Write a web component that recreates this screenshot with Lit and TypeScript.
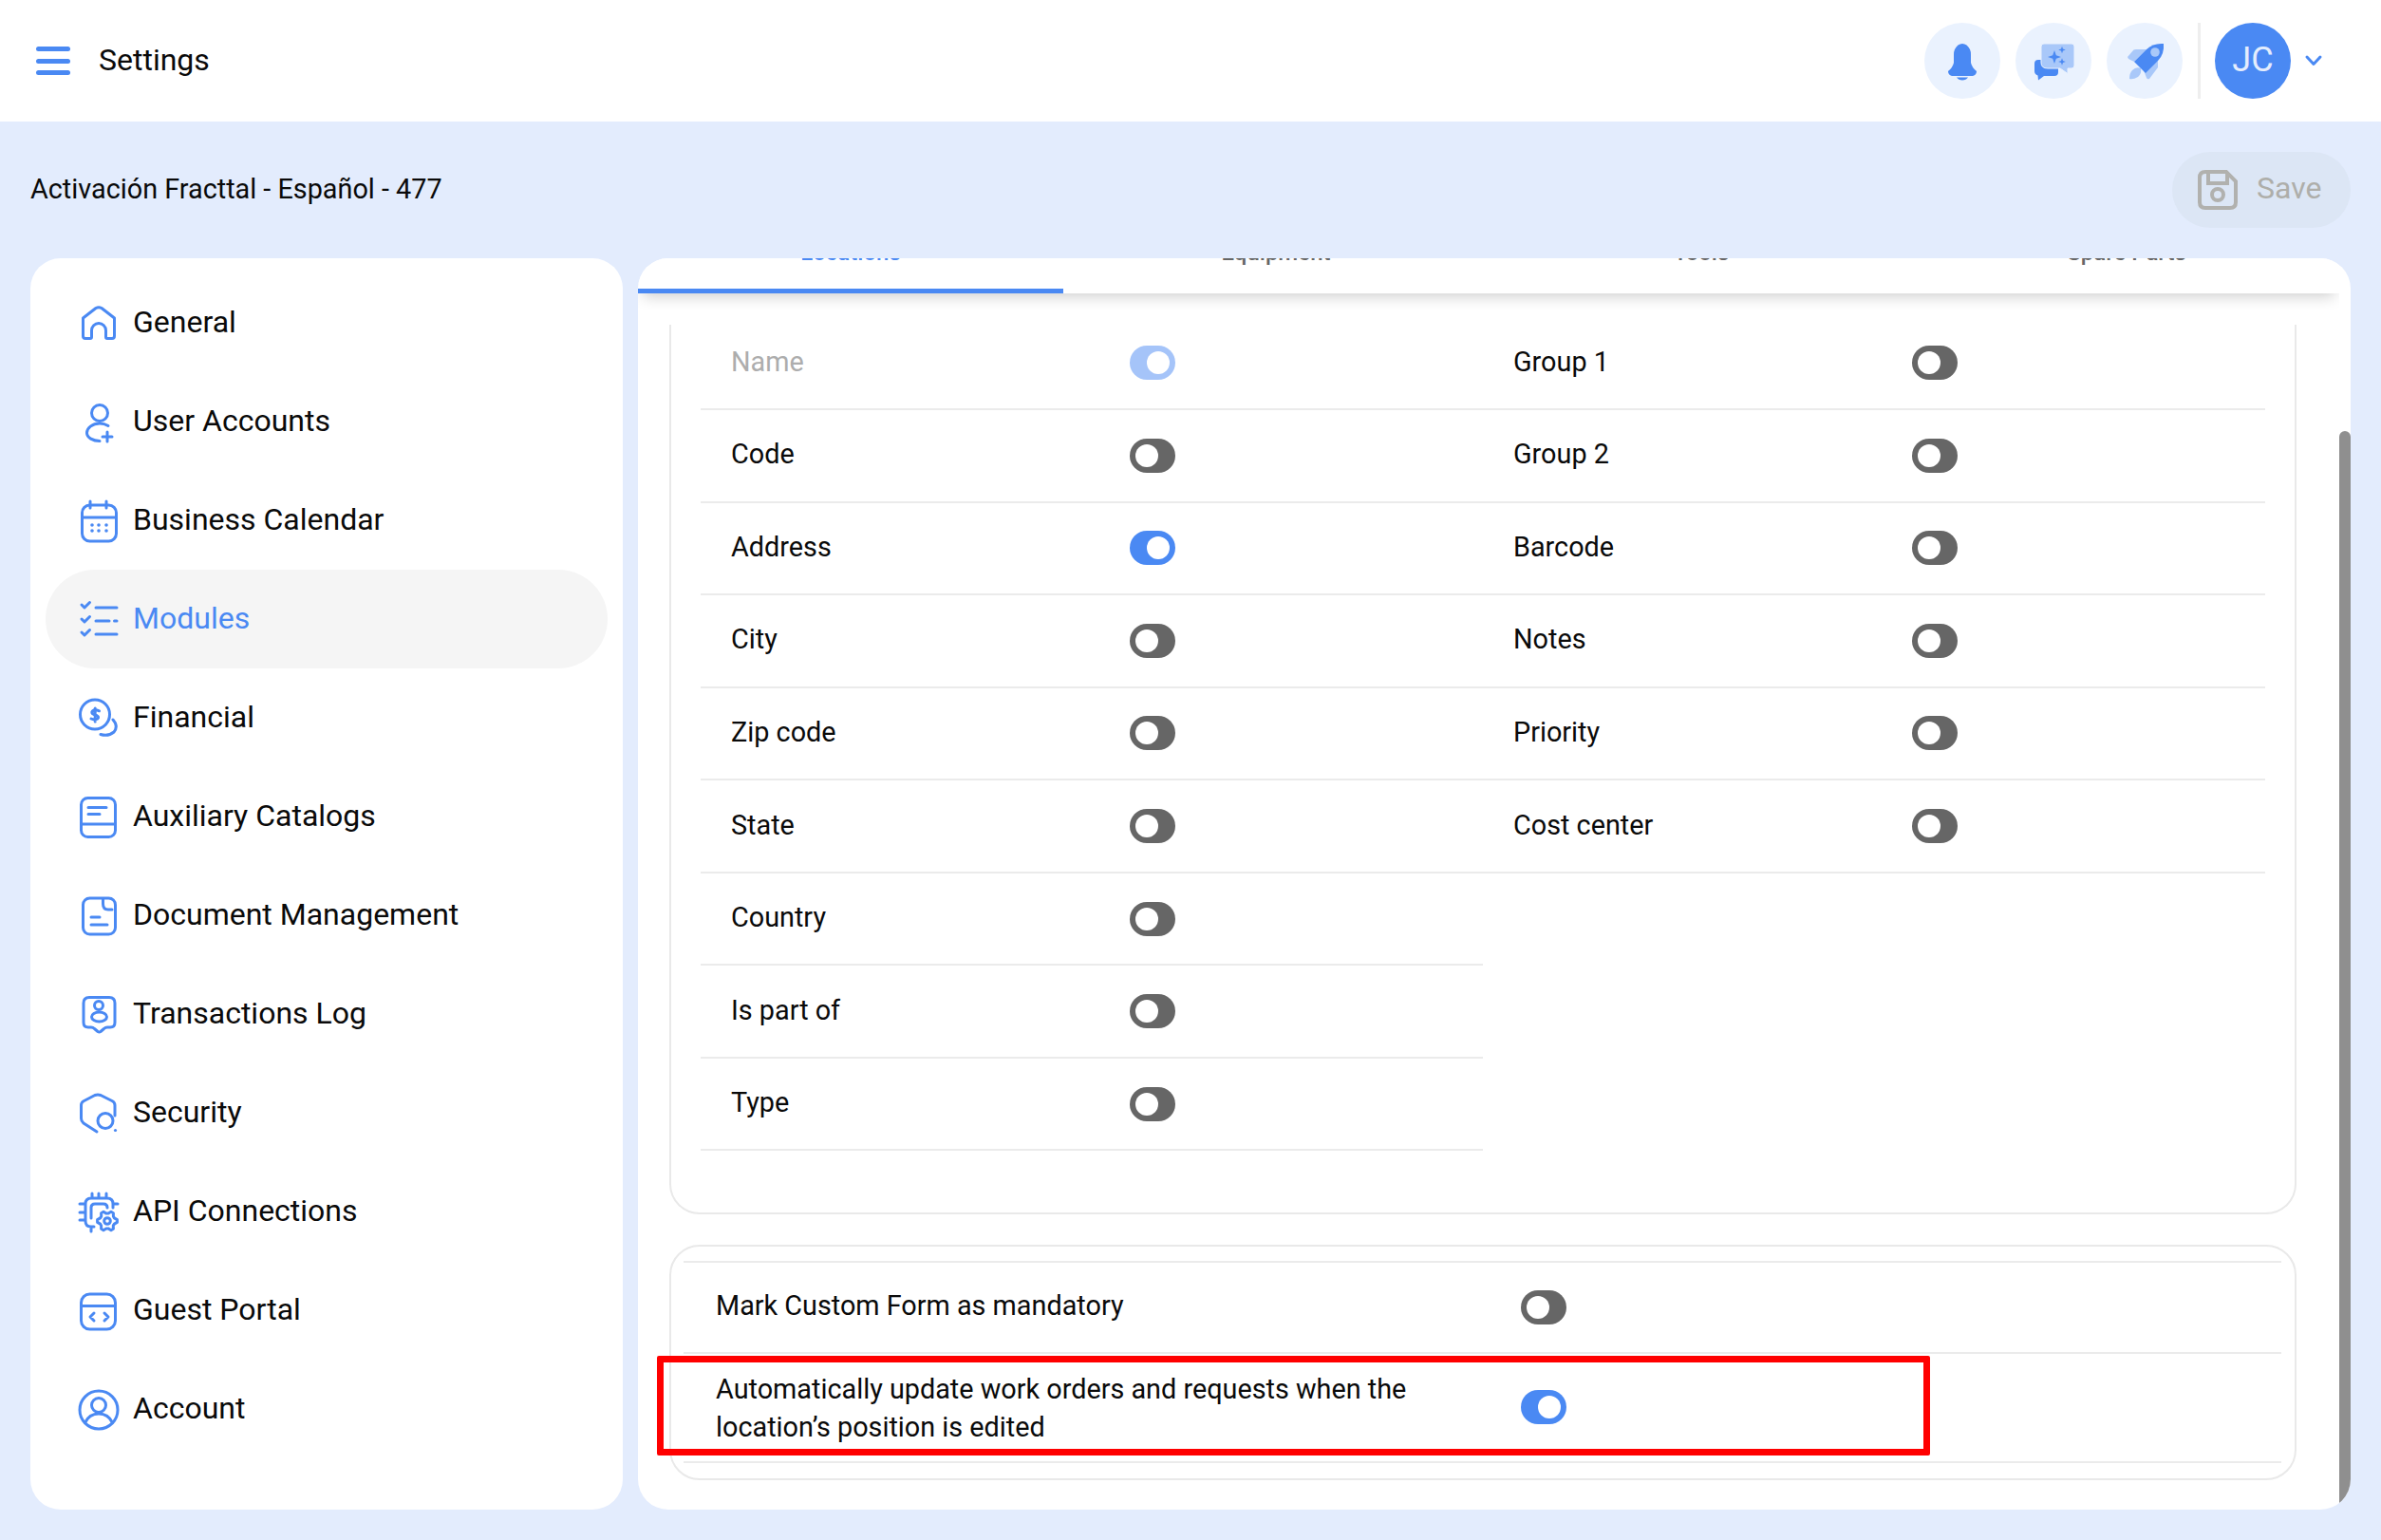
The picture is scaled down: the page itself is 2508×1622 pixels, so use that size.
import { LitElement, html, css, svg } from "lit";
import { customElement } from "lit/decorators.js";

const gear = (() => {
  const cx = 31, cy = 32;
  const pts: string[] = [];
  for (let i = 0; i < 24; i++) {
    const a = (i / 24) * Math.PI * 2;
    const r = [10.5, 10.5, 8, 8][i % 4];
    pts.push(`${(cx + r * Math.cos(a - 0.13)).toFixed(1)} ${(cy + r * Math.sin(a - 0.13)).toFixed(1)}`);
  }
  return "M" + pts.join("L") + "Z";
})();

const navIcons: Record<string, unknown> = {
  general: svg`<path d="M5.5 17 19 6.5Q22 5 25 6.5L38.5 17V36Q38.5 38.5 36 38.5H31Q29.5 38.5 29.5 37V30A7.5 7.5 0 0 0 14.5 30V37Q14.5 38.5 13 38.5H8Q5.5 38.5 5.5 36Z"/>`,
  user: svg`<circle cx="23" cy="13" r="8.5"/><path d="M32 26.5Q28 24 23 24C15 24 9.5 29 9.5 34 9.5 39 16 42.5 23 42.5"/><path d="M31 33V43M26 38H36"/>`,
  calendar: svg`<rect x="4.5" y="6" width="36" height="38" rx="8"/><path d="M4.5 19H40.5M13 2V9M30 2V9"/><g class="f"><circle class="f" cx="15" cy="27" r="1.8"/><circle class="f" cx="22" cy="27" r="1.8"/><circle class="f" cx="30" cy="27" r="1.8"/><circle class="f" cx="15" cy="33" r="1.8"/><circle class="f" cx="22" cy="33" r="1.8"/><circle class="f" cx="30" cy="33" r="1.8"/></g>`,
  modules: svg`<path d="M4 7 7 10 12.5 4.5M4 22 7 25 12.5 19.5M4 36 7 39 12.5 33.5M19 10H41M19 24H33M38.5 24H41M19 38H41"/>`,
  financial: svg`<circle cx="18" cy="18.5" r="15.5"/><path d="M37 24Q43 31 38 37 32 42 24 39.5"/><path d="M22.5 14.8Q18 12.8 15.5 14.8 13.5 17 16.8 18.5L19.8 19.5Q22.8 21 20.8 23 18 24.8 14 23M18.2 12V26"/>`,
  catalogs: svg`<rect x="3.5" y="2.5" width="36" height="41" rx="7"/><path d="M3.5 30H39.5M11 12.5H30M11 19.5H23"/>`,
  document: svg`<rect x="5.5" y="4" width="34" height="38" rx="7"/><path d="M26.5 5V10Q26.5 16 32 16H36M14 24H23M14 32H31"/>`,
  log: svg`<path d="M12 4.5H33Q39 4.5 39 10.5V31Q39 36 34 36H31Q29 36 27.5 37.5L24 40.5Q22.5 41.5 21 40.5L17.5 37.5Q16 36 14 36H11Q6 36 6 31V10.5Q6 4.5 12 4.5Z"/><circle cx="22" cy="13" r="4.5"/><ellipse cx="22.5" cy="25" rx="8" ry="5"/>`,
  security: svg`<path d="M39 25V14Q39 11 36 9.5L24 3.5Q21 2.5 18 3.5L6.5 9.5Q3.5 11 3.5 14V28Q3.5 31 6 33L20 42"/><circle cx="29" cy="30.5" r="8"/><circle class="f" cx="39.5" cy="40.5" r="1.6"/>`,
  api: svg`<path d="M17 38H14Q8 38 8 32V14Q8 8 14 8H31Q37 8 37 14V18M14 29V18Q14 14 18 14H27Q31 14 31 18M15 3V8M22 3V8M30 3V8M2 14H8M2 23H8M2 31H8M37 14H42M14 38V43"/><path d="${gear}"/><circle cx="31" cy="32" r="3.3"/>`,
  guest: svg`<rect x="3.5" y="5" width="36" height="37" rx="9"/><path d="M3.5 17.5H39.5M17 25 13 29 17 33M28 25 32 29 28 33"/>`,
  account: svg`<circle cx="22" cy="23" r="20"/><circle cx="22" cy="18" r="7.5"/><path d="M7.5 36.5Q12 27 22 27 32 27 36.5 36.5"/>`,
};

const navItems = [
  ["general", "General"],
  ["user", "User Accounts"],
  ["calendar", "Business Calendar"],
  ["modules", "Modules"],
  ["financial", "Financial"],
  ["catalogs", "Auxiliary Catalogs"],
  ["document", "Document Management"],
  ["log", "Transactions Log"],
  ["security", "Security"],
  ["api", "API Connections"],
  ["guest", "Guest Portal"],
  ["account", "Account"],
];

const leftFields: [string, string][] = [
  ["Name", "locked"], ["Code", "off"], ["Address", "on"], ["City", "off"], ["Zip code", "off"],
  ["State", "off"], ["Country", "off"], ["Is part of", "off"], ["Type", "off"],
];
const rightFields: [string, string][] = [
  ["Group 1", "off"], ["Group 2", "off"], ["Barcode", "off"], ["Notes", "off"], ["Priority", "off"], ["Cost center", "off"],
];

const sparkle = (x: number, y: number, r: number) => {
  const k = r * 0.26;
  return `M${x} ${y - r}L${x + k} ${y - k}L${x + r} ${y}L${x + k} ${y + k}L${x} ${y + r}L${x - k} ${y + k}L${x - r} ${y}L${x - k} ${y - k}Z`;
};

@customElement("app-root")
export class AppRoot extends LitElement {
  static styles = css`
    :host {
      display: block;
      position: relative;
      width: 2508px;
      height: 1622px;
      overflow: hidden;
      background: #e3ecfd;
      font-family: Roboto, "Liberation Sans", sans-serif;
      color: #0a0a0a;
    }
    svg { display: block; overflow: visible; }
    .topbar {
      height: 128px;
      background: #fff;
      display: flex;
      align-items: center;
      padding: 0 24px 0 38px;
    }
    .burger { display: flex; flex-direction: column; gap: 7.5px; width: 36px; margin-right: 30px; }
    .burger i { display: block; height: 5px; border-radius: 3px; background: #4a89f3; }
    .page { font-size: 32px; flex: 1; margin-top: -3px; }
    .round {
      width: 80px; height: 80px; border-radius: 50%;
      background: #eaf2fe; margin-right: 16px; flex: none;
    }
    .sep { width: 3px; height: 80px; background: #eeeeee; margin-right: 15px; }
    .avatar {
      width: 80px; height: 80px; border-radius: 50%;
      background: #4a89f3; color: #e4edfd; font-size: 36px; padding-bottom: 3px; box-sizing: border-box;
      display: flex; align-items: center; justify-content: center; margin-right: 15px;
    }
    .caret { width: 18px; height: 12px; margin-right: 38px; }
    .caret path { fill: none; stroke: #4a89f3; stroke-width: 3; stroke-linecap: round; stroke-linejoin: round; }
    .sub {
      height: 144px;
      display: flex;
      align-items: center;
      justify-content: space-between;
      padding: 0 32px;
    }
    .title { font-size: 28.8px; margin-top: -2px; }
    .save {
      width: 188px; height: 80px; border-radius: 40px; background: #dce6f5;
      display: flex; align-items: center; gap: 20px; padding-left: 27px; box-sizing: border-box;
      color: #aeaeaa; font-size: 32px;
    }
    .save span { margin-top: -4px; }
    .save svg { fill: none; stroke: #b1b1ae; stroke-width: 4; }
    .main { display: flex; gap: 16px; padding: 0 32px; height: 1318px; }
    .side {
      width: 624px; flex: none; box-sizing: border-box; background: #fff;
      border-radius: 32px; padding: 16px;
    }
    .item {
      height: 104px; display: flex; align-items: center; gap: 12px;
      padding-left: 32px; font-size: 32px; border-radius: 52px;
    }
    .item span { margin-top: -2px; }
    .item svg { fill: none; stroke: #4a89f3; stroke-width: 3; stroke-linecap: round; stroke-linejoin: round; flex: none; }
    .item svg circle.f { fill: #4a89f3; stroke: none; }
    .item.active { background: #f5f5f5; color: #4a89f3; }
    .card {
      flex: 1; background: #fff; border-radius: 32px; overflow: hidden;
      display: flex; min-width: 0;
    }
    .body { flex: 1; min-width: 0; display: flex; flex-direction: column; overflow: hidden; }
    .track { width: 12px; flex: none; }
    .thumb { margin-top: 182px; height: 1136px; background: #8f8f8f; border-radius: 6px 6px 0 0; }
    .tabs {
      height: 37px; flex: none; display: flex; position: relative;
      box-shadow: 0 8px 16px -5px rgba(0, 0, 0, 0.2);
      background: #fff;
    }
    .tab {
      flex: 1; box-sizing: border-box; height: 37px; display: flex; flex-direction: column;
      justify-content: flex-end; align-items: center; padding-bottom: 29px;
      font-size: 24px; line-height: 28px; color: #666; font-weight: 500; overflow: visible; white-space: nowrap;
    }
    .tab.sel { color: #4a89f3; box-shadow: inset 0 -5px 0 #4a89f3; }
    .scroll { flex: 1; margin-top: 33px; overflow: hidden; min-height: 0; }
    .panels { margin-top: -40px; padding: 0 45px 0 33px; }
    .panel {
      border: 2px solid #e9e9e9; border-radius: 32px; box-sizing: border-box;
    }
    .fields {
      height: 976.5px; padding: 30.5px 0 0 31px; display: grid; grid-template-columns: 824px 824px; align-content: start;
    }
    .row {
      height: 97.55px; box-sizing: border-box; border-bottom: 2px solid #ebebeb;
      display: grid; grid-template-columns: 420px 48px; align-items: center; padding-left: 32px;
      font-size: 28.8px;
    }
    .row.locked .lbl { color: #adadad; }
    .lbl { margin-top: -3px; }
    .toggle {
      width: 48px; height: 36px; border-radius: 18px; position: relative; display: block; background: #666;
    }
    .toggle::after {
      content: ""; position: absolute; top: 6px; left: 6px; width: 24px; height: 24px;
      border-radius: 50%; background: #fff;
    }
    .toggle.on { background: #4a89f3; }
    .toggle.locked { background: #a5c4f9; }
    .toggle.on::after, .toggle.locked::after { left: 18px; }
    .forms {
      margin-top: 32px; height: 248px; padding: 15px 14px 0 13px;
    }
    .frow {
      display: grid; grid-template-columns: 848px 48px; align-items: center; padding-left: 34px;
      font-size: 28.8px; line-height: 40px; border-bottom: 2px solid #ebebeb; box-sizing: border-box;
    }
    .frow.first { height: 98px; border-top: 2px solid #ebebeb; }
    .frow.second { height: 115px; }
    .frow.second .lbl { margin-top: 1px; }
    .frow .lbl { max-width: 790px; }
    .mark {
      position: absolute; left: 692px; top: 1428px; width: 1341px; height: 105px; box-sizing: border-box;
      border: 7px solid #ff0000; border-radius: 2px;
    }
  `;

  private row(f: [string, string]) {
    return html`<div class="row ${f[1] === "locked" ? "locked" : ""}">
      <span class="lbl">${f[0]}</span><span class="toggle ${f[1]}"></span>
    </div>`;
  }

  render() {
    return html`
      <div class="topbar">
        <div class="burger"><i></i><i></i><i></i></div>
        <div class="page">Settings</div>
        <div class="round">
          <svg width="80" height="80" viewBox="0 0 80 80" fill="#4a89f3">
            <path d="M40 22Q45 22 48 28 49 30 49 34L49 42Q50 47 55 51 55 55 51 56L29 56Q25 55 25 51 30 47 31 42L31 34Q31 30 32 28 35 22 40 22Z"/>
            <path d="M34 57.5H46Q44 60.5 40 60.5 36 60.5 34 57.5Z"/>
          </svg>
        </div>
        <div class="round">
          <svg width="80" height="80" viewBox="0 0 80 80">
            <path fill="#4a89f3" d="M24 39H41Q45 39 45 43V52Q45 56 41 56H30L24 60.5 23.5 55.5Q20 54 20 51V43Q20 39 24 39Z"/>
            <path fill="#a9c8f9" stroke="#eaf2fe" stroke-width="1" d="M30 22H59Q62 22 62 25V45Q62 48 59 48H55V53.5L47 48H34Q27 48 27 42V25Q27 22 30 22Z"/>
            <path fill="#4a89f3" d="${sparkle(41, 36, 7) + sparkle(49, 28.5, 3.8) + sparkle(49, 41, 3.8)}"/>
          </svg>
        </div>
        <div class="round">
          <svg width="80" height="80" viewBox="0 0 80 80">
            <path fill="#a9c8f9" d="M22 36 28.5 28.5Q29.5 28 31 28L42 28 29 41 23 38Z"/>
            <path fill="#a9c8f9" d="M54 40V47L45 59Q43 60 42 58L39 50Z"/>
            <path fill="#a9c8f9" d="M36 48Q37 54 33 57 28 60 24 59 24 53 27 50 31 46 36 48Z"/>
            <path fill="#4a89f3" d="M60 22Q61 33 54 40L41 53 29 41 42 28Q49 21 60 22Z"/>
            <circle fill="#a9c8f9" cx="51" cy="31" r="4.8"/>
          </svg>
        </div>
        <div class="sep"></div>
        <div class="avatar">JC</div>
        <svg class="caret" viewBox="0 0 18 12"><path d="M2 2 9 9.5 16 2"/></svg>
      </div>
      <div class="sub">
        <div class="title">Activación Fracttal - Español - 477</div>
        <div class="save">
          <svg width="42" height="42" viewBox="0 0 42 42">
            <path d="M8 2H30L40 12V34Q40 40 34 40H8Q2 40 2 34V8Q2 2 8 2Z"/>
            <path d="M11 2V14H31V4"/>
            <circle cx="21" cy="26" r="6"/>
          </svg>
          <span>Save</span>
        </div>
      </div>
      <div class="main">
        <nav class="side">
          ${navItems.map(
            ([k, l]) => html`<div class="item ${k === "modules" ? "active" : ""}">
              <svg width="48" height="48" viewBox="-2 -2 48 48">${navIcons[k]}</svg><span>${l}</span>
            </div>`
          )}
        </nav>
        <section class="card">
          <div class="body">
            <div class="tabs">
              <div class="tab sel">Locations</div>
              <div class="tab">Equipment</div>
              <div class="tab">Tools</div>
              <div class="tab">Spare Parts</div>
            </div>
            <div class="scroll">
              <div class="panels">
                <div class="panel fields">
                  <div>${leftFields.map((f) => this.row(f))}</div>
                  <div>${rightFields.map((f) => this.row(f))}</div>
                </div>
                <div class="panel forms">
                  <div class="frow first"><span class="lbl">Mark Custom Form as mandatory</span><span class="toggle off"></span></div>
                  <div class="frow second"><span class="lbl">Automatically update work orders and requests when the location’s position is edited</span><span class="toggle on"></span></div>
                </div>
              </div>
            </div>
          </div>
          <div class="track"><div class="thumb"></div></div>
        </section>
      </div>
      <div class="mark"></div>
    `;
  }
}
